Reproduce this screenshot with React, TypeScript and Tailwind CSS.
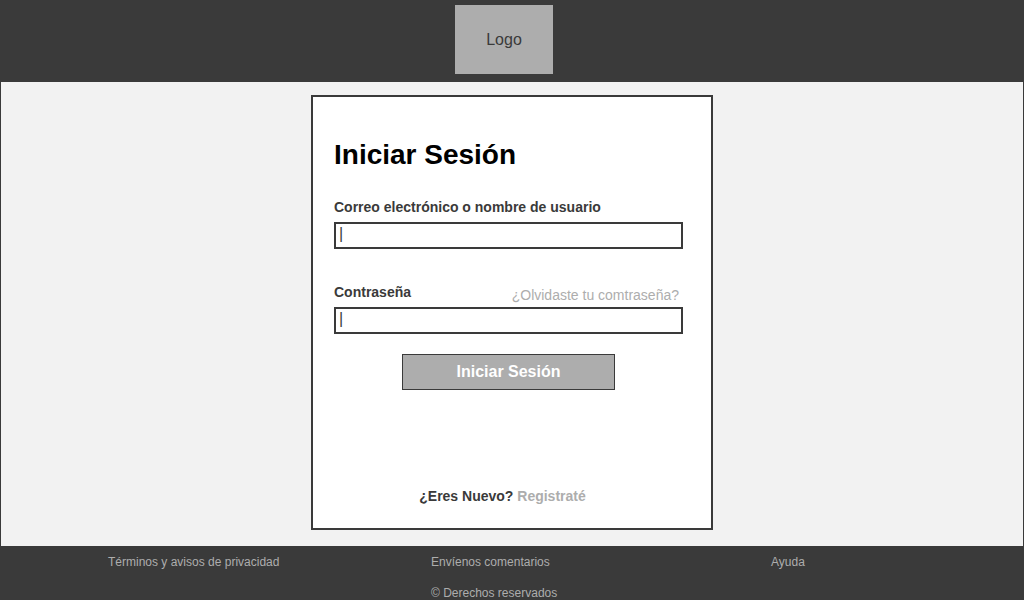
import React from "react";

type FieldProps = {
  id: string;
  label: string;
  type: string;
  aside?: React.ReactNode;
};

function Field({ id, label, type, aside }: FieldProps) {
  return (
    <div>
      <div className="flex items-start justify-between pr-1">
        <label htmlFor={id} className="text-sm leading-5 font-bold">
          {label}
        </label>
        {aside}
      </div>
      <div className="relative mt-[5px]">
        <input
          id={id}
          name={id}
          type={type}
          className="block h-[27px] w-full border-2 border-[#3a3a3a] bg-white px-1 text-base outline-none"
        />
        <span
          aria-hidden="true"
          className="pointer-events-none absolute inset-y-0 left-[5px] flex items-center pb-[3px] text-base leading-none"
        >
          |
        </span>
      </div>
    </div>
  );
}

export default function App() {
  return (
    <div className="flex min-h-screen flex-col bg-[#3a3a3a] font-['Liberation_Sans',Arial,sans-serif] text-[#3a3a3a]">
      <header className="flex justify-center pt-[5px] pr-4 pb-2">
        <div className="flex h-[69px] w-[98px] items-center justify-center bg-[#adadad] text-base">
          Logo
        </div>
      </header>

      <main className="flex justify-center border-x border-[#3a3a3a] bg-[#f2f2f2] pt-[13px] pb-4">
        <form
          className="w-full max-w-[402px] border-2 border-[#3a3a3a] bg-white pt-[42px] pr-7 pb-[22px] pl-[21px]"
          onSubmit={(e) => e.preventDefault()}
        >
          <h1 className="text-[28px] leading-8 font-bold text-black">Iniciar Sesión</h1>

          <div className="mt-[26px] flex flex-col gap-[33px]">
            <Field id="usuario" label="Correo electrónico o nombre de usuario" type="text" />
            <Field
              id="contrasena"
              label="Contraseña"
              type="password"
              aside={
                <a href="#recuperar" className="-mb-[3px] pt-[3px] text-sm leading-5 text-[#adadad]">
                  ¿Olvidaste tu comtraseña?
                </a>
              }
            />
          </div>

          <button
            type="submit"
            className="mx-auto mt-5 block h-9 w-[213px] border border-[#3a3a3a] bg-[#adadad] text-base leading-5 font-bold text-white"
          >
            Iniciar Sesión
          </button>

          <p className="mt-24 pr-3 text-center text-sm leading-5 font-bold">
            ¿Eres Nuevo?{" "}
            <a href="#registro" className="text-[#adadad]">
              Registraté
            </a>
          </p>
        </form>
      </main>

      <footer className="grid grid-cols-[323fr_340fr_253fr] gap-y-[15px] pt-2 pl-[108px] text-xs leading-4 text-[#adadad]">
        <a href="#terminos">Términos y avisos de privacidad</a>
        <a href="#comentarios">Envíenos comentarios</a>
        <a href="#ayuda">Ayuda</a>
        <p className="col-start-2 -mb-px">© Derechos reservados</p>
      </footer>
    </div>
  );
}
